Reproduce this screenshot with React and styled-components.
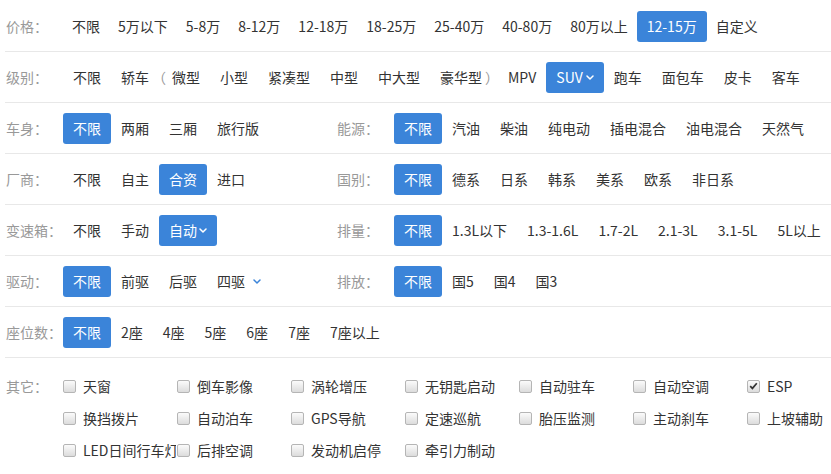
import React from "react";
import styled, { createGlobalStyle } from "styled-components";

const Global = createGlobalStyle`
  html, body { margin: 0; padding: 0; background: #fff; }
  body { font-family: "Noto Sans CJK SC", "Microsoft YaHei", sans-serif; }
`;

const BLUE = "#3b84d9";

const Page = styled.div`
  width: 831px;
  padding-top: 1px;
  font-family: "Noto Sans CJK SC", "Microsoft YaHei", sans-serif;
  font-size: 14px;
  color: #333;
`;

const Row = styled.div`
  display: flex;
  align-items: center;
  height: 50px;
  margin-left: 5px;
  border-bottom: 1px solid #e8e8e8;
  white-space: nowrap;
`;

const Group = styled.div`
  display: flex;
  align-items: center;
  flex-shrink: 0;
  width: ${(p) => (p.$half ? "331px" : "auto")};
`;

const Label = styled.span`
  flex-shrink: 0;
  width: 57px;
  padding-left: 1px;
  color: #999;
`;

const Item = styled.span`
  display: inline-flex;
  align-items: center;
  height: 31px;
  padding: 0 ${(p) => (p.$tight && !p.$active ? 9 : 10)}px;
  border-radius: 3px;
  background: ${(p) => (p.$active ? BLUE : "transparent")};
  color: ${(p) => (p.$active ? "#fff" : "#333")};
  cursor: pointer;
`;

const Paren = styled.span`
  color: #999;
  margin-left: ${(p) => p.$ml}px;
  margin-right: ${(p) => p.$mr}px;
`;

const Chev = styled.svg`
  margin-left: ${(p) => p.$gap}px;
  flex-shrink: 0;
`;

const Chevron = ({ color = "currentColor", gap = 3 }) => (
  <Chev $gap={gap} width="8" height="5" viewBox="0 0 8 5">
    <polyline points="1,1 4,4 7,1" fill="none" stroke={color} strokeWidth="1.5" strokeLinecap="round" strokeLinejoin="round" />
  </Chev>
);

const Other = styled.div`
  display: flex;
  align-items: flex-start;
  margin-left: 5px;
  padding-top: 12px;
`;

const OtherLabel = styled(Label)`
  line-height: 32px;
`;

const CheckGrid = styled.div`
  display: grid;
  grid-template-columns: repeat(7, 114px);
`;

const CheckItem = styled.label`
  display: flex;
  align-items: center;
  height: 32px;
  width: 113px;
  overflow: hidden;
  white-space: nowrap;
  color: #333;
`;

const Box = styled.span`
  flex-shrink: 0;
  width: 11px;
  height: 11px;
  margin-right: 7px;
  border: 1px solid #b5b5b5;
  border-radius: 2px;
  background: linear-gradient(#fbfbfb, #dcdcdc);
  display: flex;
  align-items: center;
  justify-content: center;
`;

const Check = ({ checked, label }) => (
  <CheckItem>
    <Box>
      {checked && (
        <svg width="9" height="8" viewBox="0 0 9 8">
          <polyline points="1.2,4.2 3.4,6.4 7.8,1.2" fill="none" stroke="#333" strokeWidth="1.7" />
        </svg>
      )}
    </Box>
    {label}
  </CheckItem>
);

const Items = ({ list, active, tight }) =>
  list.map((t) => (
    <Item key={t} $active={t === active} $tight={tight}>
      {t}
    </Item>
  ));

const others = [
  "天窗", "倒车影像", "涡轮增压", "无钥匙启动", "自动驻车", "自动空调", "ESP",
  "换挡拨片", "自动泊车", "GPS导航", "定速巡航", "胎压监测", "主动刹车", "上坡辅助",
  "LED日间行车灯", "后排空调", "发动机启停", "牵引力制动",
];

export default function App() {
  return (
    <Page>
      <Global />
      <Row>
        <Group>
          <Label>价格：</Label>
          <Items
            tight
            list={["不限", "5万以下", "5-8万", "8-12万", "12-18万", "18-25万", "25-40万", "40-80万", "80万以上", "12-15万", "自定义"]}
            active="12-15万"
          />
        </Group>
      </Row>
      <Row>
        <Group>
          <Label>级别：</Label>
          <Item>不限</Item>
          <Item>轿车</Item>
          <Paren $ml={-7} $mr={-4}>（</Paren>
          <Item>微型</Item>
          <Item>小型</Item>
          <Item>紧凑型</Item>
          <Item>中型</Item>
          <Item>中大型</Item>
          <Item>豪华型</Item>
          <Paren $ml={-7} $mr={-1}>）</Paren>
          <Item>MPV</Item>
          <Item $active>
            SUV
            <Chevron color="#fff" gap={3} />
          </Item>
          <Item>跑车</Item>
          <Item>面包车</Item>
          <Item>皮卡</Item>
          <Item>客车</Item>
        </Group>
      </Row>
      <Row>
        <Group $half>
          <Label>车身：</Label>
          <Items list={["不限", "两厢", "三厢", "旅行版"]} active="不限" />
        </Group>
        <Group>
          <Label>能源：</Label>
          <Items list={["不限", "汽油", "柴油", "纯电动", "插电混合", "油电混合", "天然气"]} active="不限" />
        </Group>
      </Row>
      <Row>
        <Group $half>
          <Label>厂商：</Label>
          <Items list={["不限", "自主", "合资", "进口"]} active="合资" />
        </Group>
        <Group>
          <Label>国别：</Label>
          <Items list={["不限", "德系", "日系", "韩系", "美系", "欧系", "非日系"]} active="不限" />
        </Group>
      </Row>
      <Row>
        <Group $half>
          <Label>变速箱：</Label>
          <Item>不限</Item>
          <Item>手动</Item>
          <Item $active>
            自动
            <Chevron color="#fff" gap={2} />
          </Item>
        </Group>
        <Group>
          <Label>排量：</Label>
          <Items list={["不限", "1.3L以下", "1.3-1.6L", "1.7-2L", "2.1-3L", "3.1-5L", "5L以上"]} active="不限" />
        </Group>
      </Row>
      <Row>
        <Group $half>
          <Label>驱动：</Label>
          <Item $active>不限</Item>
          <Item>前驱</Item>
          <Item>后驱</Item>
          <Item>
            四驱
            <Chevron color={BLUE} gap={8} />
          </Item>
        </Group>
        <Group>
          <Label>排放：</Label>
          <Items list={["不限", "国5", "国4", "国3"]} active="不限" />
        </Group>
      </Row>
      <Row>
        <Group>
          <Label>座位数：</Label>
          <Items list={["不限", "2座", "4座", "5座", "6座", "7座", "7座以上"]} active="不限" />
        </Group>
      </Row>
      <Other>
        <OtherLabel>其它：</OtherLabel>
        <CheckGrid>
          {others.map((o) => (
            <Check key={o} label={o} checked={o === "ESP"} />
          ))}
        </CheckGrid>
      </Other>
    </Page>
  );
}
